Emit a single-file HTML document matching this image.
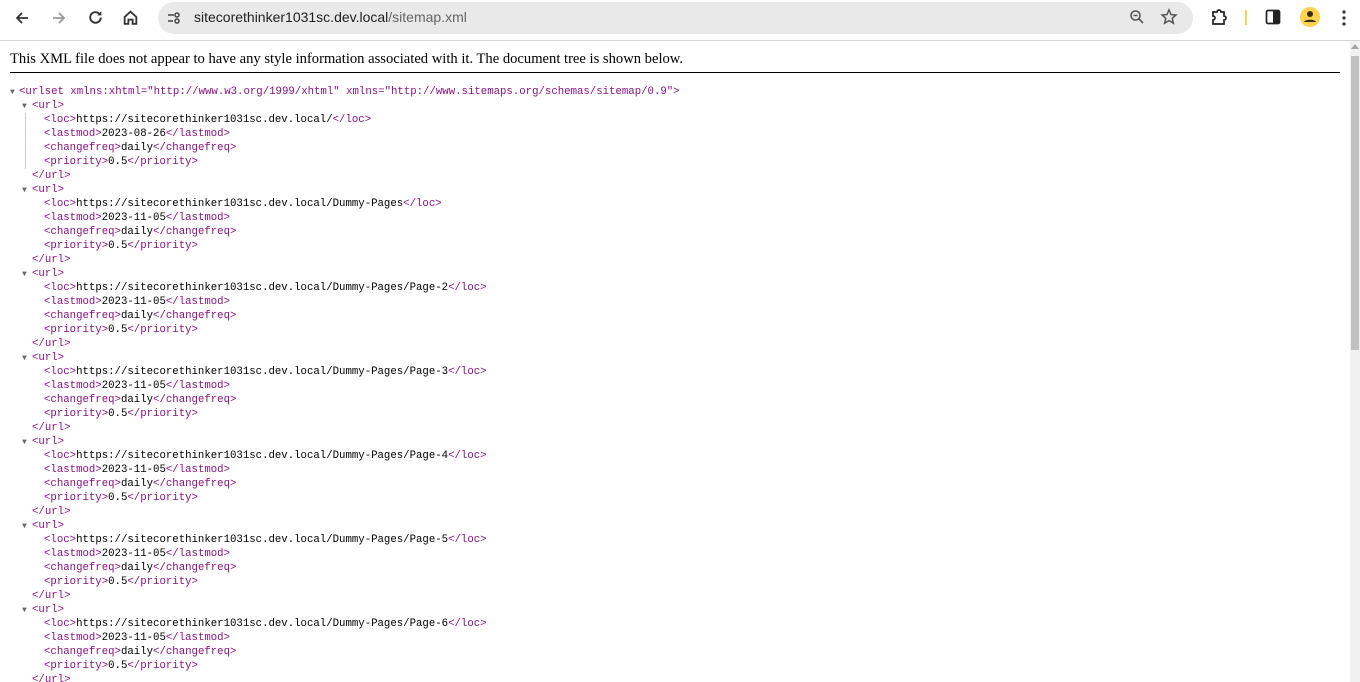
<!DOCTYPE html>
<html style="overflow:hidden;height:682px"><head><meta charset="utf-8"><style>
*{margin:0;padding:0;box-sizing:border-box}
body{width:1360px;height:682px;overflow:hidden;background:#fff;position:relative;font-family:"Liberation Sans",sans-serif}
.top{position:absolute;left:0;top:0;width:1360px;height:41px;background:#fff;border-bottom:1px solid #d6d6d6}
.pill{position:absolute;left:158px;top:2px;width:1035px;height:32px;border-radius:16px;background:#e9e9e9}
.url{position:absolute;left:194px;top:9px;font-size:14px;color:#1f1f1f}
.url span{color:#666}
.ico{position:absolute}
.msg{position:absolute;left:10px;top:51px;font-family:"Liberation Serif",serif;font-size:14.6px;color:#000}
.hr{position:absolute;left:10px;top:72px;width:1330px;height:1px;background:#000}
.xml{position:absolute;left:0;top:85px;font-family:"Liberation Mono",monospace;font-size:10.7px;line-height:14px;color:#000}
.l{height:14px;position:relative}
.l span{white-space:pre}
.t{color:#881280}
.tri{position:absolute;color:#666;font-size:8px}
.vl{position:absolute;left:25px;width:1px;background:#ccc}
.sb{position:absolute;left:1350px;top:41px;width:10px;height:641px;background:#f1f1f1}
.th{position:absolute;left:1351px;top:56px;width:8px;height:294px;background:#c1c1c1}
</style></head><body>
<div class="top">
<svg class="ico" style="left:14px;top:10px" width="16" height="16" viewBox="0 0 16 16"><path d="M14 8H3M8 3L3 8l5 5" stroke="#333" stroke-width="1.8" fill="none"/></svg>
<svg class="ico" style="left:51px;top:10px" width="16" height="16" viewBox="0 0 16 16"><path d="M2 8h11M8 3l5 5-5 5" stroke="#999" stroke-width="1.8" fill="none"/></svg>
<svg class="ico" style="left:87px;top:9px" width="17" height="17" viewBox="0 0 16 16"><path d="M13 8a5 5 0 1 1-1.5-3.6" stroke="#333" stroke-width="1.8" fill="none"/><path d="M13.5 2v4h-4z" fill="#333"/></svg>
<svg class="ico" style="left:122px;top:9px" width="17" height="17" viewBox="0 0 16 16"><path d="M2.5 7.5L8 2.5l5.5 5V14H10V10H6v4H2.5z" stroke="#333" stroke-width="1.7" fill="none"/></svg>
<div class="pill"></div>
<svg class="ico" style="left:166px;top:10px" width="16" height="16" viewBox="0 0 16 16"><path d="M2 5h6M2 11h5" stroke="#444" stroke-width="1.6"/><circle cx="11" cy="5" r="2" fill="none" stroke="#444" stroke-width="1.5"/><circle cx="11" cy="11" r="2" fill="none" stroke="#444" stroke-width="1.5"/></svg>
<div class="url">sitecorethinker1031sc.dev.local<span>/sitemap.xml</span></div>
<svg class="ico" style="left:1129px;top:9px" width="16" height="16" viewBox="0 0 16 16"><circle cx="6.5" cy="6.5" r="4.5" fill="none" stroke="#555" stroke-width="1.6"/><path d="M10 10l4 4M4.5 6.5h4" stroke="#555" stroke-width="1.6"/></svg>
<svg class="ico" style="left:1160px;top:8px" width="18" height="18" viewBox="0 0 18 18"><path d="M9 2l2 4.6 5 .4-3.8 3.3 1.2 4.9L9 12.6 4.6 15.2l1.2-4.9L2 7l5-.4z" fill="none" stroke="#555" stroke-width="1.5"/></svg>
<svg class="ico" style="left:1210px;top:8px" width="18" height="18" viewBox="0 0 18 18"><path d="M3 4h4a2 2 0 0 1 4 0h3v4a2 2 0 0 1 0 4v4H3v-4a2 2 0 0 0 0-4z" fill="none" stroke="#222" stroke-width="1.7"/></svg>
<div class="ico" style="left:1245px;top:10px;width:2px;height:15px;background:#f5d25a"></div>
<svg class="ico" style="left:1265px;top:9px" width="16" height="16" viewBox="0 0 16 16"><rect x="1.5" y="1.5" width="13" height="13" rx="1.5" fill="none" stroke="#222" stroke-width="1.7"/><rect x="8" y="1.5" width="6.5" height="13" fill="#222"/></svg>
<svg class="ico" style="left:1299px;top:6px" width="22" height="22" viewBox="0 0 22 22"><circle cx="11" cy="11" r="10" fill="#fbd34d"/><circle cx="11" cy="8" r="3" fill="#3a2d00"/><path d="M5 16c1-3 11-3 12 0z" fill="#3a2d00"/></svg>
<svg class="ico" style="left:1341px;top:9px" width="6" height="18" viewBox="0 0 6 18"><circle cx="3" cy="3" r="1.6" fill="#333"/><circle cx="3" cy="9" r="1.6" fill="#333"/><circle cx="3" cy="15" r="1.6" fill="#333"/></svg>
</div>
<div class="msg">This XML file does not appear to have any style information associated with it. The document tree is shown below.</div>
<div class="hr"></div>
<div class="xml"><div class="l"><span class="tri" style="left:10px;top:1px">▼</span><span style="position:absolute;left:19px"><span class="t">&lt;urlset xmlns:xhtml="http://www.w3.org/1999/xhtml" xmlns="http://www.sitemaps.org/schemas/sitemap/0.9"&gt;</span></span></div><div class="l"><span class="tri" style="left:22px;top:1px">▼</span><span style="position:absolute;left:32px" class="t">&lt;url&gt;</span></div><div class="l"><span style="position:absolute;left:44px"><span class="t">&lt;loc&gt;</span>https://sitecorethinker1031sc.dev.local/<span class="t">&lt;/loc&gt;</span></span></div><div class="l"><span style="position:absolute;left:44px"><span class="t">&lt;lastmod&gt;</span>2023-08-26<span class="t">&lt;/lastmod&gt;</span></span></div><div class="l"><span style="position:absolute;left:44px"><span class="t">&lt;changefreq&gt;</span>daily<span class="t">&lt;/changefreq&gt;</span></span></div><div class="l"><span style="position:absolute;left:44px"><span class="t">&lt;priority&gt;</span>0.5<span class="t">&lt;/priority&gt;</span></span></div><div class="l"><span style="position:absolute;left:32px" class="t">&lt;/url&gt;</span></div><div class="l"><span class="tri" style="left:22px;top:1px">▼</span><span style="position:absolute;left:32px" class="t">&lt;url&gt;</span></div><div class="l"><span style="position:absolute;left:44px"><span class="t">&lt;loc&gt;</span>https://sitecorethinker1031sc.dev.local/Dummy-Pages<span class="t">&lt;/loc&gt;</span></span></div><div class="l"><span style="position:absolute;left:44px"><span class="t">&lt;lastmod&gt;</span>2023-11-05<span class="t">&lt;/lastmod&gt;</span></span></div><div class="l"><span style="position:absolute;left:44px"><span class="t">&lt;changefreq&gt;</span>daily<span class="t">&lt;/changefreq&gt;</span></span></div><div class="l"><span style="position:absolute;left:44px"><span class="t">&lt;priority&gt;</span>0.5<span class="t">&lt;/priority&gt;</span></span></div><div class="l"><span style="position:absolute;left:32px" class="t">&lt;/url&gt;</span></div><div class="l"><span class="tri" style="left:22px;top:1px">▼</span><span style="position:absolute;left:32px" class="t">&lt;url&gt;</span></div><div class="l"><span style="position:absolute;left:44px"><span class="t">&lt;loc&gt;</span>https://sitecorethinker1031sc.dev.local/Dummy-Pages/Page-2<span class="t">&lt;/loc&gt;</span></span></div><div class="l"><span style="position:absolute;left:44px"><span class="t">&lt;lastmod&gt;</span>2023-11-05<span class="t">&lt;/lastmod&gt;</span></span></div><div class="l"><span style="position:absolute;left:44px"><span class="t">&lt;changefreq&gt;</span>daily<span class="t">&lt;/changefreq&gt;</span></span></div><div class="l"><span style="position:absolute;left:44px"><span class="t">&lt;priority&gt;</span>0.5<span class="t">&lt;/priority&gt;</span></span></div><div class="l"><span style="position:absolute;left:32px" class="t">&lt;/url&gt;</span></div><div class="l"><span class="tri" style="left:22px;top:1px">▼</span><span style="position:absolute;left:32px" class="t">&lt;url&gt;</span></div><div class="l"><span style="position:absolute;left:44px"><span class="t">&lt;loc&gt;</span>https://sitecorethinker1031sc.dev.local/Dummy-Pages/Page-3<span class="t">&lt;/loc&gt;</span></span></div><div class="l"><span style="position:absolute;left:44px"><span class="t">&lt;lastmod&gt;</span>2023-11-05<span class="t">&lt;/lastmod&gt;</span></span></div><div class="l"><span style="position:absolute;left:44px"><span class="t">&lt;changefreq&gt;</span>daily<span class="t">&lt;/changefreq&gt;</span></span></div><div class="l"><span style="position:absolute;left:44px"><span class="t">&lt;priority&gt;</span>0.5<span class="t">&lt;/priority&gt;</span></span></div><div class="l"><span style="position:absolute;left:32px" class="t">&lt;/url&gt;</span></div><div class="l"><span class="tri" style="left:22px;top:1px">▼</span><span style="position:absolute;left:32px" class="t">&lt;url&gt;</span></div><div class="l"><span style="position:absolute;left:44px"><span class="t">&lt;loc&gt;</span>https://sitecorethinker1031sc.dev.local/Dummy-Pages/Page-4<span class="t">&lt;/loc&gt;</span></span></div><div class="l"><span style="position:absolute;left:44px"><span class="t">&lt;lastmod&gt;</span>2023-11-05<span class="t">&lt;/lastmod&gt;</span></span></div><div class="l"><span style="position:absolute;left:44px"><span class="t">&lt;changefreq&gt;</span>daily<span class="t">&lt;/changefreq&gt;</span></span></div><div class="l"><span style="position:absolute;left:44px"><span class="t">&lt;priority&gt;</span>0.5<span class="t">&lt;/priority&gt;</span></span></div><div class="l"><span style="position:absolute;left:32px" class="t">&lt;/url&gt;</span></div><div class="l"><span class="tri" style="left:22px;top:1px">▼</span><span style="position:absolute;left:32px" class="t">&lt;url&gt;</span></div><div class="l"><span style="position:absolute;left:44px"><span class="t">&lt;loc&gt;</span>https://sitecorethinker1031sc.dev.local/Dummy-Pages/Page-5<span class="t">&lt;/loc&gt;</span></span></div><div class="l"><span style="position:absolute;left:44px"><span class="t">&lt;lastmod&gt;</span>2023-11-05<span class="t">&lt;/lastmod&gt;</span></span></div><div class="l"><span style="position:absolute;left:44px"><span class="t">&lt;changefreq&gt;</span>daily<span class="t">&lt;/changefreq&gt;</span></span></div><div class="l"><span style="position:absolute;left:44px"><span class="t">&lt;priority&gt;</span>0.5<span class="t">&lt;/priority&gt;</span></span></div><div class="l"><span style="position:absolute;left:32px" class="t">&lt;/url&gt;</span></div><div class="l"><span class="tri" style="left:22px;top:1px">▼</span><span style="position:absolute;left:32px" class="t">&lt;url&gt;</span></div><div class="l"><span style="position:absolute;left:44px"><span class="t">&lt;loc&gt;</span>https://sitecorethinker1031sc.dev.local/Dummy-Pages/Page-6<span class="t">&lt;/loc&gt;</span></span></div><div class="l"><span style="position:absolute;left:44px"><span class="t">&lt;lastmod&gt;</span>2023-11-05<span class="t">&lt;/lastmod&gt;</span></span></div><div class="l"><span style="position:absolute;left:44px"><span class="t">&lt;changefreq&gt;</span>daily<span class="t">&lt;/changefreq&gt;</span></span></div><div class="l"><span style="position:absolute;left:44px"><span class="t">&lt;priority&gt;</span>0.5<span class="t">&lt;/priority&gt;</span></span></div><div class="l"><span style="position:absolute;left:32px" class="t">&lt;/url&gt;</span></div></div>
<div class="vl" style="top:113px;height:56px"></div>
<div class="sb"></div><div class="th"></div>
<div style="position:absolute;left:1351px;top:44px;width:0;height:0;border-left:4px solid transparent;border-right:4px solid transparent;border-bottom:5px solid #a3a3a3"></div>
</body></html>
